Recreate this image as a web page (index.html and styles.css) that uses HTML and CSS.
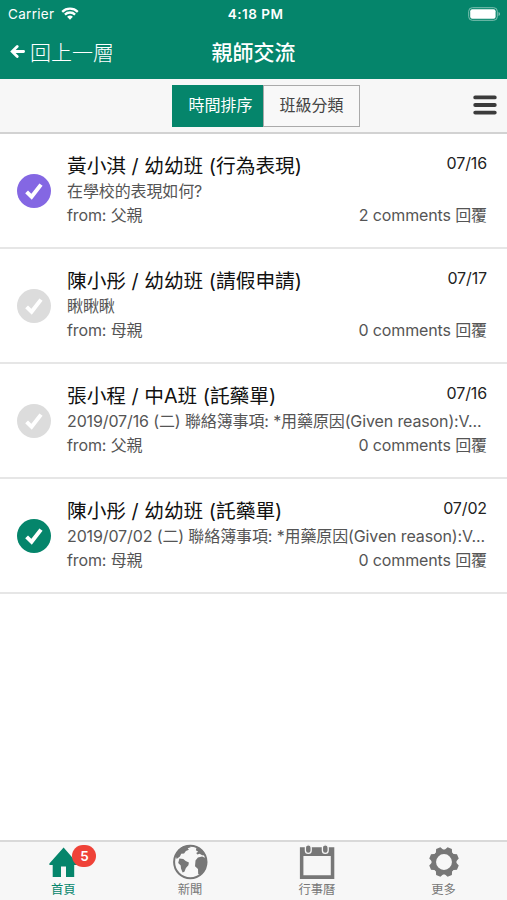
FILE: index.html
```html
<!DOCTYPE html>
<html lang="zh-Hant">
<head>
  <meta charset="utf-8">
  <title>親師交流</title>
  <link rel="stylesheet" href="styles.css">
</head>
<body>
  <header class="header">
    <div class="status-bar">
      <div class="carrier">
        <span>Carrier</span>
        <svg class="wifi" viewBox="0 0 18 13">
          <path d="M1.2 4.8a11.2 11.2 0 0 1 15.6 0M3.9 7.6a7.3 7.3 0 0 1 10.2 0"/>
          <path class="wifi-dot" d="M9 12.8 6.1 9.8a4.2 4.2 0 0 1 5.8 0z"/>
        </svg>
      </div>
      <div class="clock">4:18 PM</div>
      <svg class="battery" viewBox="0 0 33 14">
        <rect class="battery-case" x=".7" y=".7" width="28.6" height="12.6" rx="3.6"/>
        <rect x="2.2" y="2.2" width="25.4" height="9.6" rx="2"/>
        <path class="battery-tip" d="M30.5 5v4q1.6-.5 1.6-2t-1.6-2z"/>
      </svg>
    </div>
    <div class="nav-bar">
      <a class="back">
        <svg class="back-arrow" viewBox="0 0 15 13"><path d="M7.2 1.6 2.2 6.5l5 4.9M2.6 6.5h11"/></svg>
        <span>回上一層</span>
      </a>
      <h1 class="nav-title">親師交流</h1>
      <span></span>
    </div>
  </header>

  <div class="toolbar">
    <span></span>
    <div class="segment">
      <button class="segment-btn active">時間排序</button>
      <button class="segment-btn">班級分類</button>
    </div>
    <svg class="menu-icon" viewBox="0 0 24 20"><path d="M2.2 2.4h19.6M2.2 10h19.6M2.2 17.6h19.6"/></svg>
  </div>

  <main class="list">
    <div class="item">
      <div class="check purple"><svg viewBox="0 0 34 34"><path d="m9.6 17.8 5 5L24 10.6"/></svg></div>
      <div class="item-body">
        <div class="item-row"><h2>黃小淇 / 幼幼班 (行為表現)</h2><span class="date">07/16</span></div>
        <p class="message">在學校的表現如何?</p>
        <div class="item-row"><span class="from">from: 父親</span><span class="comments">2 comments 回覆</span></div>
      </div>
    </div>
    <div class="item">
      <div class="check"><svg viewBox="0 0 34 34"><path d="m9.6 17.8 5 5L24 10.6"/></svg></div>
      <div class="item-body">
        <div class="item-row"><h2>陳小彤 / 幼幼班 (請假申請)</h2><span class="date">07/17</span></div>
        <p class="message">瞅瞅瞅</p>
        <div class="item-row"><span class="from">from: 母親</span><span class="comments">0 comments 回覆</span></div>
      </div>
    </div>
    <div class="item">
      <div class="check"><svg viewBox="0 0 34 34"><path d="m9.6 17.8 5 5L24 10.6"/></svg></div>
      <div class="item-body">
        <div class="item-row"><h2>張小程 / 中A班 (託藥單)</h2><span class="date">07/16</span></div>
        <p class="message">2019/07/16 (二) 聯絡簿事項: *用藥原因(Given reason):V...</p>
        <div class="item-row"><span class="from">from: 父親</span><span class="comments">0 comments 回覆</span></div>
      </div>
    </div>
    <div class="item">
      <div class="check green"><svg viewBox="0 0 34 34"><path d="m9.6 17.8 5 5L24 10.6"/></svg></div>
      <div class="item-body">
        <div class="item-row"><h2>陳小彤 / 幼幼班 (託藥單)</h2><span class="date">07/02</span></div>
        <p class="message">2019/07/02 (二) 聯絡簿事項: *用藥原因(Given reason):V...</p>
        <div class="item-row"><span class="from">from: 母親</span><span class="comments">0 comments 回覆</span></div>
      </div>
    </div>
  </main>

  <nav class="tab-bar">
    <a class="tab active">
      <span class="tab-icon">
        <svg viewBox="0 0 36 36"><path d="M18.6 3.5 4.4 19.5V21h3.3v12H16V22.5h5V33h8.2V21h3.3v-1.5z"/></svg>
        <span class="badge">5</span>
      </span>
      <span>首頁</span>
    </a>
    <a class="tab">
      <span class="tab-icon">
        <svg viewBox="0 0 36 36">
          <circle class="line" cx="18.3" cy="18" r="16.2"/>
          <path d="M7.4 14.6 11.3 15l2.4 2 3.2 1.4-.5 2.9-2.5 2.6-1.5 3.9-1.8.7-1.6-4.1-.3-2.9-2.5-2.4z"/>
          <path d="m23.5 16.5 2.4-3.1 4.2-.9 3.8 1.8.6 5.2-2 5.7-4.2 5.2-2.1-.2-.2-5.3-3-2.7z"/>
          <path d="m3.5 11 3-5.4L11.5 2l6-.6 1.2 1.8-3 1.1 1.2 1.4-3 1.3-1.8 2.4-2.9.4-1.3 2.7L4.6 15z"/>
          <path d="m21.5 1.8 5 1.4 5.2 4.7 1.9 3.7-3.4-.4-2.6-1.5-2.2.7-1.2-1.5 2-1.2-2.3-1.4.5-2.3z"/>
        </svg>
      </span>
      <span>新聞</span>
    </a>
    <a class="tab">
      <span class="tab-icon">
        <svg viewBox="0 0 36 36">
          <path fill-rule="evenodd" d="M.9 3.3h34.4V35H.9zM4.4 12v19.3h27.4V12z"/>
          <rect class="ring" x="6.4" y=".8" width="5.8" height="8.6" rx="2.9"/>
          <rect class="ring" x="23.4" y=".8" width="5.8" height="8.6" rx="2.9"/>
        </svg>
      </span>
      <span>行事曆</span>
    </a>
    <a class="tab">
      <span class="tab-icon">
        <svg viewBox="0 0 36 36">
          <circle class="gear-ring" cx="18" cy="18" r="10.2"/>
          <g transform="rotate(22.5 18 18)">
            <path d="M13 8.5 15.7 3h4.6L23 8.5zM13 27.5l2.7 5.5h4.6l2.7-5.5zM8.5 13 3 15.7v4.6L8.5 23zM27.5 13l5.5 2.7v4.6L27.5 23z"/>
            <path transform="rotate(45 18 18)" d="M13 8.5 15.7 3h4.6L23 8.5zM13 27.5l2.7 5.5h4.6l2.7-5.5zM8.5 13 3 15.7v4.6L8.5 23zM27.5 13l5.5 2.7v4.6L27.5 23z"/>
          </g>
        </svg>
      </span>
      <span>更多</span>
    </a>
  </nav>
</body>
</html>
```
FILE: styles.css
```css
* {
  box-sizing: border-box;
}

body {
  margin: 0;
  height: 100vh;
  display: flex;
  flex-direction: column;
  background: #fff;
  color: #111;
  font-family: Inter, 'Noto Sans CJK TC', sans-serif;
  overflow: hidden;
}

h1, h2, p {
  margin: 0;
  font-weight: 400;
}

svg {
  display: block;
}

/* Header */
.header {
  height: 79px;
  background: #05856b;
  color: #fff;
}

.status-bar {
  height: 27px;
  padding: 0 6px 0 8px;
  display: grid;
  grid-template-columns: 1fr auto 1fr;
  align-items: center;
  font-size: 13.5px;
}

.carrier {
  display: flex;
  align-items: center;
  gap: 7px;
  letter-spacing: 0.3px;
}

.wifi {
  width: 18px;
  height: 13px;
  fill: none;
  stroke: #fff;
  stroke-width: 2.3;
}

.wifi-dot {
  fill: #fff;
  stroke: none;
}

.clock {
  padding-left: 2px;
  font-weight: 600;
  letter-spacing: 0.5px;
}

.battery {
  width: 33px;
  height: 14px;
  justify-self: end;
  fill: #fff;
}

.battery-case {
  fill: none;
  stroke: #7fc0b2;
  stroke-width: 1;
}

.battery-tip {
  fill: #7fc0b2;
}

.nav-bar {
  height: 48px;
  padding: 0 10px;
  display: grid;
  grid-template-columns: 1fr auto 1fr;
  align-items: center;
}

.back {
  display: flex;
  align-items: center;
  gap: 5px;
  font-size: 21px;
  font-weight: 300;
}

.back-arrow {
  width: 15px;
  height: 13px;
  fill: none;
  stroke: #fff;
  stroke-width: 2.8;
  stroke-linecap: round;
}

.nav-title {
  font-size: 21px;
  font-weight: 500;
}

/* Toolbar */
.toolbar {
  height: 55px;
  padding: 0 10px 2px 0;
  display: grid;
  grid-template-columns: 172px 1fr auto;
  align-items: center;
  background: #f7f7f7;
  border-bottom: 2px solid #d2d2d2;
}

.segment {
  display: flex;
  padding-top: 2px;
}

.segment-btn {
  width: 91px;
  height: 42px;
  padding: 0 0 3px 6px;
  border: 0;
  background: #05856b;
  color: #fff;
  font: inherit;
  font-size: 16px;
}

.segment-btn + .segment-btn {
  width: 97px;
  padding: 0 0 3px;
  background: #f8f8f8;
  border: 1px solid #aaa;
  color: #444;
}

.menu-icon {
  width: 24px;
  height: 20px;
  fill: none;
  stroke: #3b3b3b;
  stroke-width: 3.8;
  stroke-linecap: round;
}

/* Message list */
.list {
  flex: 1;
}

.item {
  height: 115px;
  padding: 0 20px 0 17px;
  display: flex;
  align-items: center;
  gap: 16px;
  border-bottom: 2px solid #e6e6e6;
}

.check {
  width: 34px;
  height: 34px;
  flex: none;
  border-radius: 50%;
  background: #dcdcdc;
}

.check.purple {
  background: #8467e3;
}

.check.green {
  background: #05856b;
}

.check path {
  fill: none;
  stroke: #fff;
  stroke-width: 4;
}

.item-body {
  flex: 1;
  min-width: 0;
  color: #555;
  font-size: 16px;
  letter-spacing: -0.12px;
}

.item-row {
  display: flex;
  justify-content: space-between;
  height: 25px;
  line-height: 25px;
}

.item h2 {
  color: #111;
  font-size: 19.7px;
  line-height: 26px;
  letter-spacing: 0;
}

.date {
  color: #222;
  font-size: 16px;
  line-height: 21px;
}

.message {
  height: 25px;
  line-height: 26px;
  white-space: nowrap;
}

/* Tab bar */
.tab-bar {
  height: 60px;
  display: grid;
  grid-template-columns: repeat(4, 1fr);
  background: #f7f7f7;
  border-top: 2px solid #d9d9d9;
}

.tab {
  display: flex;
  flex-direction: column;
  align-items: center;
  padding-top: 2px;
  gap: 1px;
  color: #777;
  font-size: 12.3px;
  line-height: 18px;
}

.tab.active {
  color: #05856b;
}

.tab-icon {
  position: relative;
}

.tab-icon svg {
  width: 36px;
  height: 36px;
  fill: currentColor;
}

.tab-icon .line {
  fill: none;
  stroke: currentColor;
  stroke-width: 2;
}

.ring {
  stroke: #f7f7f7;
  stroke-width: 1.3;
}

.tab-icon .gear-ring {
  fill: none;
  stroke: currentColor;
  stroke-width: 4.5;
}

.badge {
  position: absolute;
  top: 1px;
  left: 27px;
  width: 24px;
  height: 22px;
  border-radius: 11px;
  background: #ef4238;
  color: #fff;
  font-size: 13.5px;
  font-weight: 600;
  line-height: 22px;
  text-align: center;
}
```
